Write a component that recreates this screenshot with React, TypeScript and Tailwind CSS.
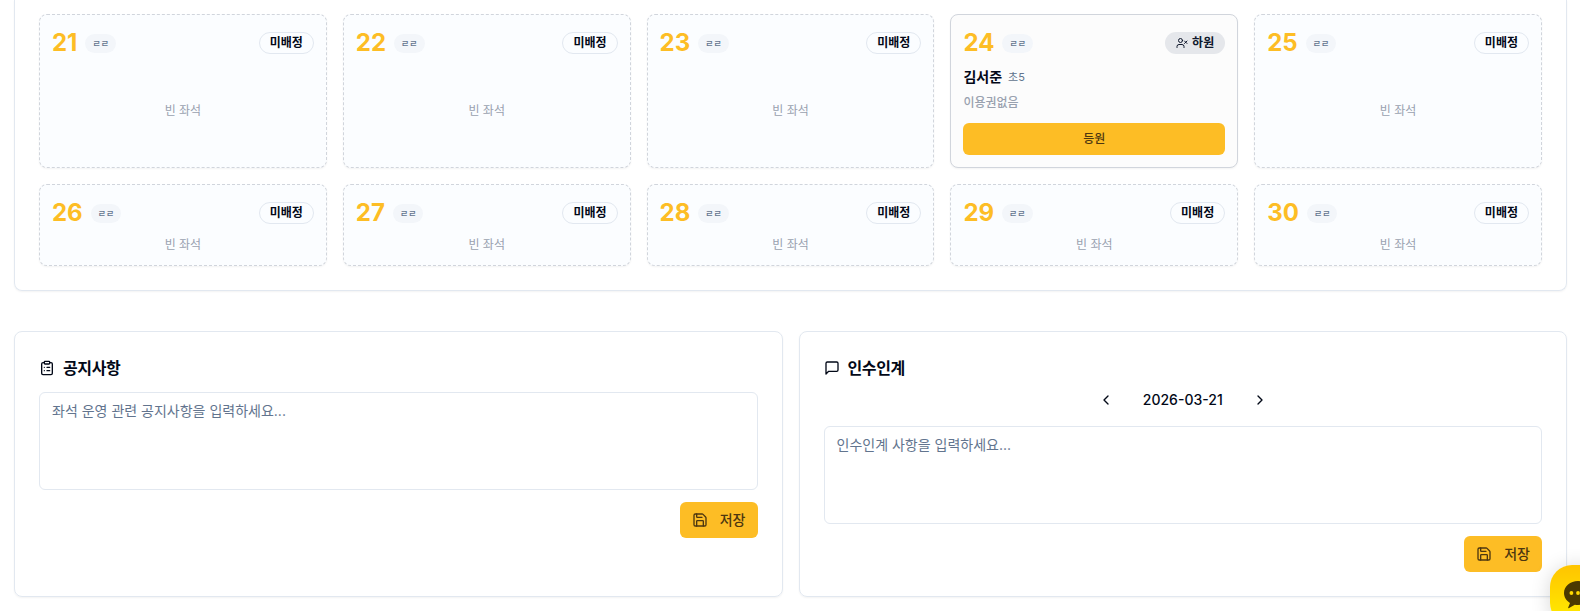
import { ChevronLeft, ChevronRight, ClipboardList, Save, UserX } from 'lucide-react';
import type { JSX, ReactNode } from 'react';

interface Seat {
  number: number;
  zone: string;
  student?: { name: string; grade: string; ticket: string };
}

const SEATS: readonly Seat[] = [
  { number: 21, zone: 'ㄹㄹ' },
  { number: 22, zone: 'ㄹㄹ' },
  { number: 23, zone: 'ㄹㄹ' },
  { number: 24, zone: 'ㄹㄹ', student: { name: '김서준', grade: '초5', ticket: '이용권없음' } },
  { number: 25, zone: 'ㄹㄹ' },
  { number: 26, zone: 'ㄹㄹ' },
  { number: 27, zone: 'ㄹㄹ' },
  { number: 28, zone: 'ㄹㄹ' },
  { number: 29, zone: 'ㄹㄹ' },
  { number: 30, zone: 'ㄹㄹ' },
];

export default function App(): JSX.Element {
  return (
    <div className="h-[611px] overflow-hidden bg-white pr-[13px] pl-3.5 font-[Inter,'Noto_Sans_CJK_KR',sans-serif] text-[#020817]">
      <section className="rounded-b-lg border border-t-0 border-slate-200 px-6 pt-3.5 pb-6 shadow-xs">
        <div className="grid grid-cols-5 gap-4">
          {SEATS.map((seat) => (
            <SeatCard key={seat.number} seat={seat} />
          ))}
        </div>
      </section>

      <div className="mt-10 grid h-[266px] grid-cols-2 gap-4">
        <Panel icon={<ClipboardList className="size-4" />} title="공지사항">
          <MemoForm placeholder="좌석 운영 관련 공지사항을 입력하세요..." />
        </Panel>
        <Panel icon={<MessageIcon />} title="인수인계">
          <div className="-mt-1.5 mb-3 flex h-7 items-center justify-center gap-2">
            <button type="button" className="flex h-7 w-9 items-center justify-center" aria-label="이전 날짜">
              <ChevronLeft className="size-4" />
            </button>
            <span className="w-[102px] text-center text-sm font-medium">2026-03-21</span>
            <button type="button" className="flex h-7 w-9 items-center justify-center" aria-label="다음 날짜">
              <ChevronRight className="size-4" />
            </button>
          </div>
          <MemoForm placeholder="인수인계 사항을 입력하세요..." />
        </Panel>
      </div>

      <ChatButton />
    </div>
  );
}

function SeatCard({ seat }: { seat: Seat }): JSX.Element {
  const { number, zone, student } = seat;

  return (
    <div
      className={
        student
          ? 'flex flex-col rounded-lg border border-gray-300 bg-[#fcfcfc] p-3 shadow-xs'
          : 'flex flex-col rounded-lg border border-dashed border-gray-300 bg-[#fbfdff] p-3 shadow-xs'
      }
    >
      <div className="mb-2 flex h-8 items-center justify-between">
        <div className="flex items-center gap-2">
          <span className="text-2xl font-bold text-[#fdbd25]">{number}</span>
          <span className="rounded-full bg-[#f3f6fa] px-[7px] py-0.5 text-[9px] leading-[15px] font-medium text-slate-500">
            {zone}
          </span>
        </div>
        {student ? (
          <span className="flex items-center gap-1 rounded-full border border-transparent bg-gray-200 px-2.5 py-0.5 text-xs font-semibold text-slate-900">
            <UserX className="size-3" />
            하원
          </span>
        ) : (
          <span className="rounded-full border border-slate-200 px-2.5 py-0.5 text-xs font-semibold">미배정</span>
        )}
      </div>
      {student ? (
        <>
          <div className="mb-2 flex h-5 items-center gap-1.5">
            <span className="text-sm font-semibold">{student.name}</span>
            <span className="text-[11px] text-slate-500">{student.grade}</span>
          </div>
          <p className="mb-3 text-xs font-medium text-gray-400">{student.ticket}</p>
          <button type="button" className="h-8 rounded-md bg-[#fdbd25] text-xs font-medium text-[#4d3710]">
            등원
          </button>
        </>
      ) : (
        <div className="flex flex-1 items-center justify-center text-xs text-gray-400">빈 좌석</div>
      )}
    </div>
  );
}

function Panel({ icon, title, children }: { icon: ReactNode; title: string; children: ReactNode }): JSX.Element {
  return (
    <section className="rounded-lg border border-slate-200 p-6 shadow-xs">
      <h3 className="mb-3 flex items-center gap-2 text-base font-semibold tracking-tight">
        {icon}
        {title}
      </h3>
      {children}
    </section>
  );
}

function MemoForm({ placeholder }: { placeholder: string }): JSX.Element {
  return (
    <div className="flex flex-col items-end gap-3">
      <textarea
        className="block h-[98px] w-full resize-none rounded-md border border-slate-200 bg-white px-3 py-2 text-sm placeholder:text-slate-500"
        placeholder={placeholder}
      />
      <button
        type="button"
        className="flex h-9 items-center gap-3 rounded-md bg-[#fdbd25] px-3 text-sm font-medium text-[#4d3710]"
      >
        <Save className="size-4" />
        저장
      </button>
    </div>
  );
}

function MessageIcon(): JSX.Element {
  return (
    <svg
      viewBox="0 0 24 24"
      className="size-4"
      fill="none"
      stroke="currentColor"
      strokeWidth={2}
      strokeLinecap="round"
      strokeLinejoin="round"
    >
      <path d="M21 15a2 2 0 0 1-2 2H7l-4 4V5a2 2 0 0 1 2-2h14a2 2 0 0 1 2 2z" />
    </svg>
  );
}

function ChatButton(): JSX.Element {
  return (
    <button
      type="button"
      aria-label="채팅 상담"
      className="fixed top-[565px] left-[1550px] flex size-[60px] items-center rounded-[22px] bg-linear-to-b from-[#ffc400] to-[#ffee00] pl-3.5 shadow-[0_2px_20px_rgba(0,0,0,0.16)]"
    >
      <svg viewBox="0 0 28 28" className="size-7">
        <path
          d="M14 0C6.300 0 0 5.300 0 12c0 4.200 2.400 7.800 6 10L4.200 26.400c-.2.600.4 1 .9.700L10.800 23.800c1 .2 2.100.3 3.200.3 7.700 0 14-5.400 14-12.100S21.700 0 14 0z"
          fill="#4a3900"
        />
        <circle cx="7.400" cy="12" r="1.900" fill="#ffd900" />
        <circle cx="14" cy="12" r="1.900" fill="#ffd900" />
        <circle cx="20.600" cy="12" r="1.900" fill="#ffd900" />
      </svg>
    </button>
  );
}
